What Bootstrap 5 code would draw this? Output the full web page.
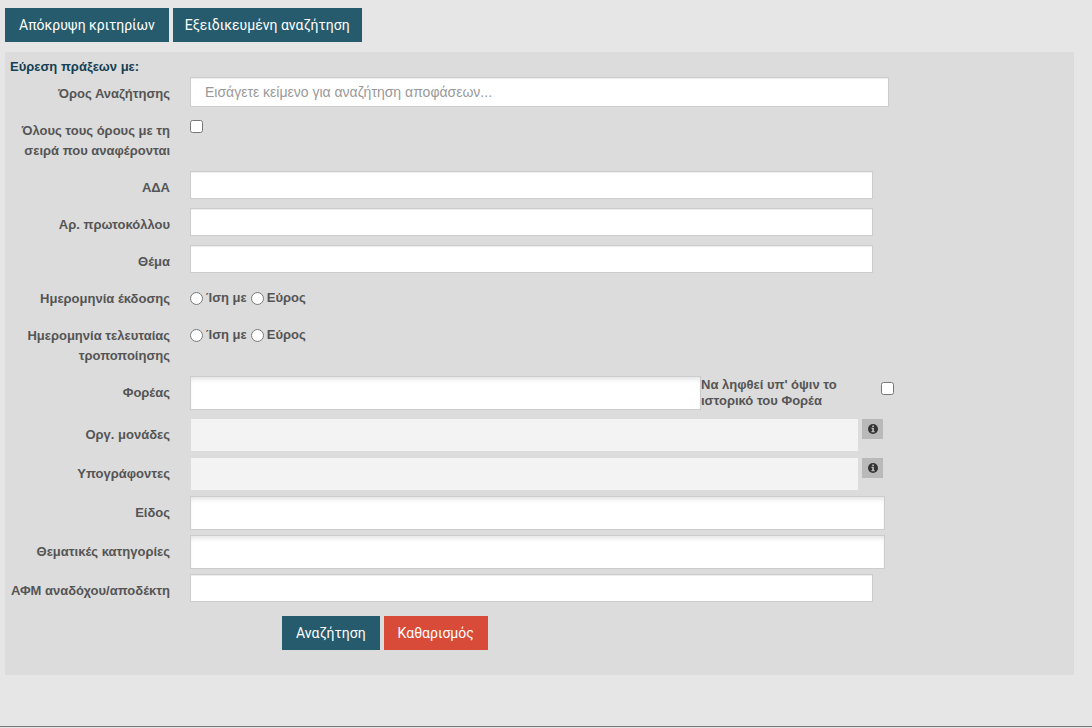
<!DOCTYPE html>
<html lang="el">
<head>
<meta charset="utf-8">
<meta name="viewport" content="width=device-width, initial-scale=1">
<title>Αναζήτηση αποφάσεων</title>
<link href="https://cdn.jsdelivr.net/npm/bootstrap@5.3.0/dist/css/bootstrap.min.css" rel="stylesheet">
<style>
body{background:#e6e6e6;color:#555;font:13px/20px "Liberation Sans",Arial,sans-serif}
.page-frame{border-bottom:1px solid #777;padding:8px 18px 0 5px;min-height:calc(100vh - 1px)}
.btn{--bs-btn-padding-x:13px;--bs-btn-padding-y:6px;--bs-btn-border-width:1px;--bs-btn-border-radius:0;--bs-btn-font-size:14px;--bs-btn-line-height:20px;--bs-btn-font-family:Roboto,sans-serif}
.btn-primary{--bs-btn-bg:#265a6d;--bs-btn-border-color:#265a6d;--bs-btn-hover-bg:#1d4a5b}
.btn-danger{--bs-btn-bg:#d84b38;--bs-btn-border-color:#d84b38}
.btn-compact{--bs-btn-padding-x:11px}
.top-actions{gap:4px}
.criteria{background:#dcdcdc;margin-top:10px;padding:5px 180px 25px 5px}
.criteria-title{color:#153f53;font-size:13px;line-height:20px;font-weight:700;margin:0}
.field-row{display:grid;grid-template-columns:160px minmax(0,1fr);column-gap:20px}
.field-label{padding:7px 0 10px;text-align:right;font-weight:700}
.row-select{margin-bottom:2px}
.row-org{margin-bottom:5px}
.form-control{border:1px solid #ccc;border-radius:0;font:14px/20px "Liberation Sans",Arial,sans-serif;padding:4px 14px;height:28px;box-shadow:inset 0 1px 1px rgba(0,0,0,.075)}
.form-control::placeholder{color:#999}
.form-control.field-main{height:30px}
.inset-main{padding-right:5px}
.inset-end{padding-right:21px}
.inset-combo{padding-right:9px}
.inset-info{padding-right:11px;gap:3px}
.form-control.combo{height:34px;box-shadow:inset 0 4px 5px -2px rgba(0,0,0,.12)}
.form-control.combo:disabled{background:#f3f3f3;background-clip:padding-box;border-color:transparent;box-shadow:none}
.tick{width:13px;height:13px;margin:6px 0 0;flex:none}
.info-btn{width:21px;height:20px;margin-top:1px;padding:0 0 2px 1px;border:0;background:#b9b9b9;color:#333;flex:none;line-height:1}
.choice{padding-top:6px;column-gap:3px}
.choice .tick{margin-top:4px}
.choice label{margin-right:1px;font-weight:700}
.history-text{width:180px;line-height:16px;font-weight:700;padding:1px 35px 0 0}
.form-actions{padding:5px 0 0 272px;gap:4px}
</style>
</head>
<body>
<main class="page-frame">
<div class="d-flex flex-wrap top-actions">
<button type="button" class="btn btn-primary">Απόκρυψη κριτηρίων</button>
<button type="button" class="btn btn-primary btn-compact">Εξειδικευμένη αναζήτηση</button>
</div>
<form class="criteria">
<h1 class="criteria-title">Εύρεση πράξεων με:</h1>
<div class="field-row"><label class="field-label" for="q">Όρος Αναζήτησης</label><div class="inset-main"><input type="text" id="q" class="form-control field-main" placeholder="Εισάγετε κείμενο για αναζήτηση αποφάσεων..."></div></div>
<div class="field-row"><label class="field-label" for="exact">Όλους τους όρους με τη σειρά που αναφέρονται</label><div class="d-flex align-items-start"><input type="checkbox" id="exact" class="tick"></div></div>
<div class="field-row"><label class="field-label" for="ada">ΑΔΑ</label><div class="inset-end"><input type="text" id="ada" class="form-control"></div></div>
<div class="field-row"><label class="field-label" for="prot">Αρ. πρωτοκόλλου</label><div class="inset-end"><input type="text" id="prot" class="form-control"></div></div>
<div class="field-row"><label class="field-label" for="subj">Θέμα</label><div class="inset-end"><input type="text" id="subj" class="form-control"></div></div>
<div class="field-row" role="radiogroup" aria-labelledby="issue"><span class="field-label" id="issue">Ημερομηνία έκδοσης</span><div class="d-flex align-items-start choice"><input type="radio" name="issue" id="i1" class="tick"><label for="i1">Ίση με</label><input type="radio" name="issue" id="i2" class="tick"><label for="i2">Εύρος</label></div></div>
<div class="field-row" role="radiogroup" aria-labelledby="modified"><span class="field-label" id="modified">Ημερομηνία τελευταίας τροποποίησης</span><div class="d-flex align-items-start choice"><input type="radio" name="modified" id="m1" class="tick"><label for="m1">Ίση με</label><input type="radio" name="modified" id="m2" class="tick"><label for="m2">Εύρος</label></div></div>
<div class="field-row row-org"><label class="field-label" for="org">Φορέας</label><div class="d-flex align-items-start"><input type="text" id="org" class="form-control combo flex-fill w-auto"><label class="history-text flex-shrink-0" for="hist">Να ληφθεί υπ' όψιν το ιστορικό του Φορέα</label><input type="checkbox" id="hist" class="tick"></div></div>
<div class="field-row row-select"><label class="field-label" for="units">Οργ. μονάδες</label><div class="d-flex align-items-start inset-info"><input type="text" id="units" class="form-control combo" disabled><button type="button" class="info-btn" aria-label="Πληροφορίες"><svg width="10" height="10" viewBox="0 0 10 10"><circle cx="5" cy="5" r="5" fill="#333"/><path d="M4.2 1.6h1.7v1.3H4.2zM3.5 3.8h2.4v3.2h.7v1.2H3.5V7h.7V5h-.7z" fill="#b9b9b9"/></svg></button></div></div>
<div class="field-row row-select"><label class="field-label" for="signers">Υπογράφοντες</label><div class="d-flex align-items-start inset-info"><input type="text" id="signers" class="form-control combo" disabled><button type="button" class="info-btn" aria-label="Πληροφορίες"><svg width="10" height="10" viewBox="0 0 10 10"><circle cx="5" cy="5" r="5" fill="#333"/><path d="M4.2 1.6h1.7v1.3H4.2zM3.5 3.8h2.4v3.2h.7v1.2H3.5V7h.7V5h-.7z" fill="#b9b9b9"/></svg></button></div></div>
<div class="field-row row-select"><label class="field-label" for="kind">Είδος</label><div class="inset-combo"><input type="text" id="kind" class="form-control combo"></div></div>
<div class="field-row row-select"><label class="field-label" for="topics">Θεματικές κατηγορίες</label><div class="inset-combo"><input type="text" id="topics" class="form-control combo"></div></div>
<div class="field-row"><label class="field-label text-nowrap" for="afm">ΑΦΜ αναδόχου/αποδέκτη</label><div class="inset-end"><input type="text" id="afm" class="form-control"></div></div>
<div class="d-flex flex-wrap form-actions"><button type="submit" class="btn btn-primary">Αναζήτηση</button><button type="reset" class="btn btn-danger">Καθαρισμός</button></div>
</form>
</main>
<script src="https://cdn.jsdelivr.net/npm/bootstrap@5.3.0/dist/js/bootstrap.bundle.min.js"></script>
</body>
</html>
